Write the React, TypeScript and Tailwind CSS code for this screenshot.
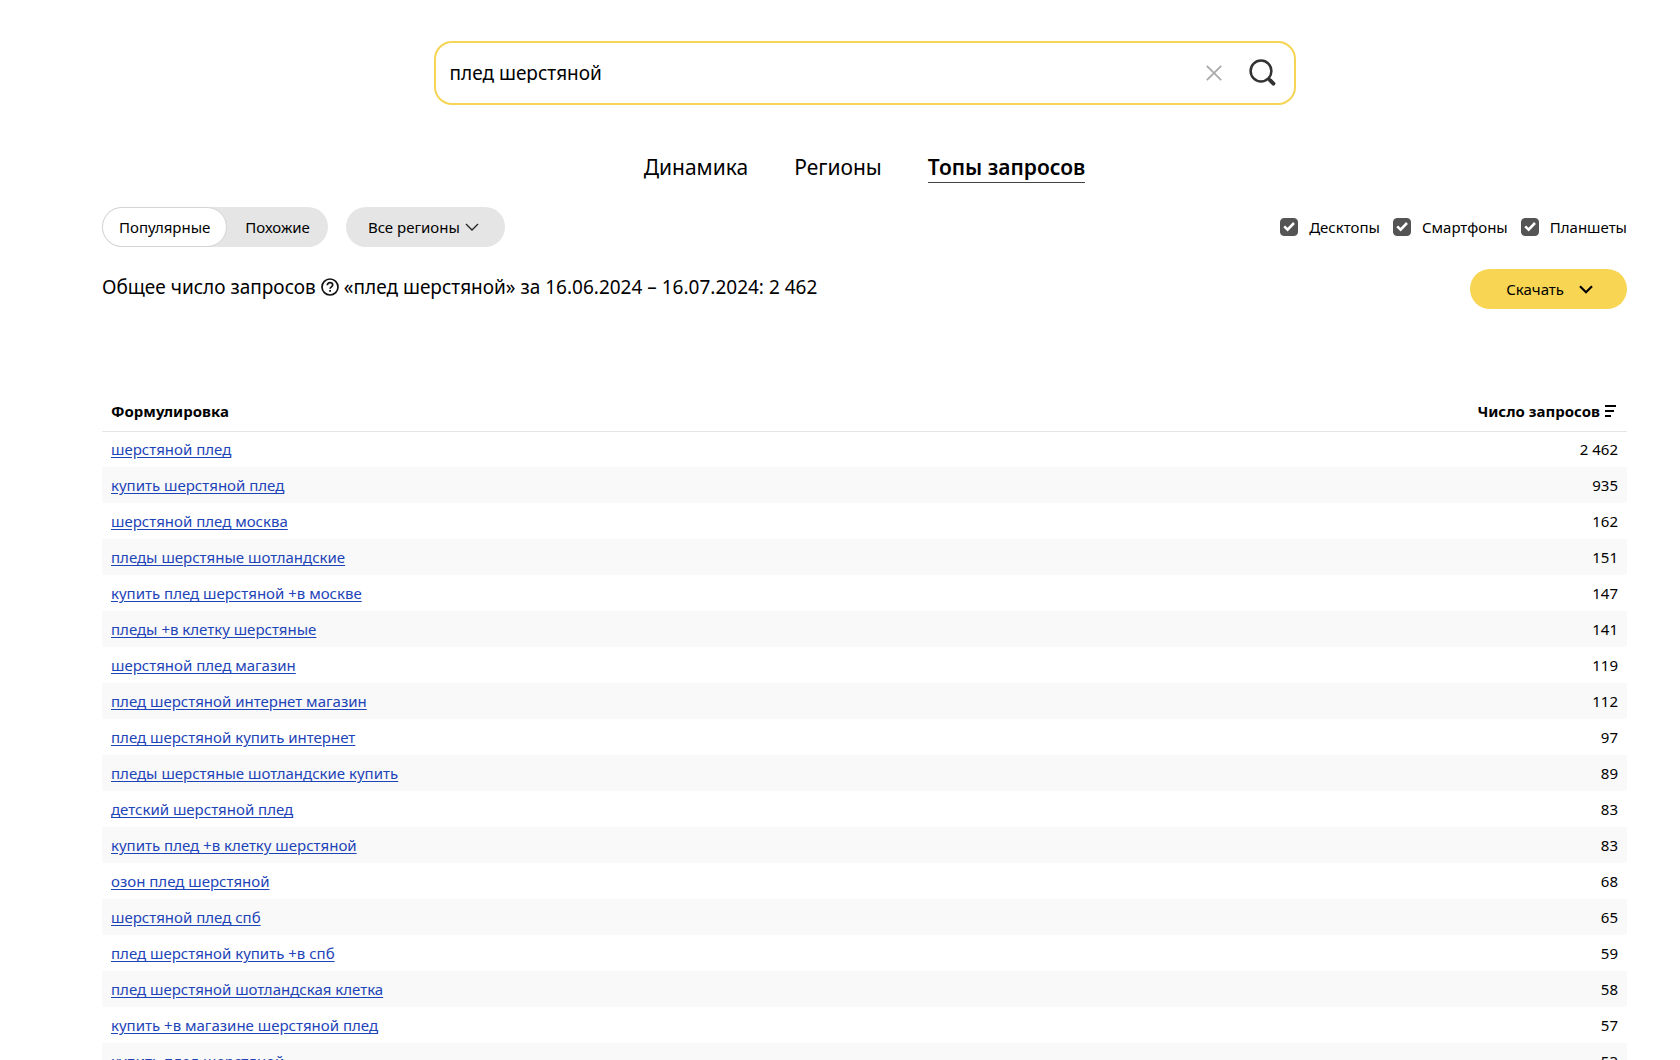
import { useState } from "react";

const rows: [string, string][] = [
  ["шерстяной плед", "2 462"],
  ["купить шерстяной плед", "935"],
  ["шерстяной плед москва", "162"],
  ["пледы шерстяные шотландские", "151"],
  ["купить плед шерстяной +в москве", "147"],
  ["пледы +в клетку шерстяные", "141"],
  ["шерстяной плед магазин", "119"],
  ["плед шерстяной интернет магазин", "112"],
  ["плед шерстяной купить интернет", "97"],
  ["пледы шерстяные шотландские купить", "89"],
  ["детский шерстяной плед", "83"],
  ["купить плед +в клетку шерстяной", "83"],
  ["озон плед шерстяной", "68"],
  ["шерстяной плед спб", "65"],
  ["плед шерстяной купить +в спб", "59"],
  ["плед шерстяной шотландская клетка", "58"],
  ["купить +в магазине шерстяной плед", "57"],
  ["купить плед шерстяной", "53"],
];

function Device({ label }: { label: string }) {
  return (
    <label className="flex items-center gap-[11px]">
      <span className="grid h-[18px] w-[18px]">
        <input
          type="checkbox"
          defaultChecked
          className="peer col-start-1 row-start-1 h-[18px] w-[18px] appearance-none rounded border border-[#545454] checked:bg-[#545454]"
        />
        <svg
          viewBox="0 0 18 18"
          className="pointer-events-none invisible col-start-1 row-start-1 h-[18px] w-[18px] peer-checked:visible"
          fill="none"
          stroke="#fff"
          strokeWidth="2.6"
        >
          <path d="M4.2 8.4 7.6 11.6 14 5" />
        </svg>
      </span>
      {label}
    </label>
  );
}

export default function App() {
  const [query, setQuery] = useState("плед шерстяной");
  return (
    <div className="h-screen overflow-hidden bg-white pt-[41px] pr-[53px] pl-[102px] font-['Noto_Sans','Open_Sans',sans-serif] text-[15px] leading-5 text-black">
      <form
        onSubmit={(e) => e.preventDefault()}
        className="mx-auto flex h-16 max-w-[862px] items-center rounded-[18px] border-2 border-[#f6d454] pr-4 pl-[14px]"
      >
        <input
          type="text"
          aria-label="Запрос"
          value={query}
          onChange={(e) => setQuery(e.target.value)}
          className="min-w-0 flex-1 text-[19px] outline-none"
        />
        <button type="button" aria-label="Очистить" onClick={() => setQuery("")} className="mr-[25px]">
          <svg viewBox="0 0 18 18" className="h-[18px] w-[18px]" fill="none" stroke="#aaa" strokeWidth="1.8">
            <path d="M1.8 1.8 16.2 16.2M16.2 1.8 1.8 16.2" />
          </svg>
        </button>
        <button type="submit" aria-label="Найти">
          <svg viewBox="0 0 30 30" className="h-[30px] w-[30px]" fill="none" stroke="#333">
            <circle cx="13" cy="13" r="10.4" strokeWidth="2.5" />
            <path d="m20.2 20.4 1.4 1.4" strokeWidth="2.4" />
            <path d="m22.2 22.4 3.2 3.2" strokeWidth="4" strokeLinecap="round" />
          </svg>
        </button>
      </form>

      <nav className="mt-[47px] flex justify-center gap-[46px] text-[21px] leading-[30px]">
        <a href="#dynamics">Динамика</a>
        <a href="#regions">Регионы</a>
        <a href="#top" className="border-b border-[#444] font-semibold">
          Топы запросов
        </a>
      </nav>

      <div className="mt-6 flex h-10 items-center justify-between">
        <div className="flex gap-[18px]">
          <div className="flex h-10 rounded-full bg-[#e5e5e5]">
            <button type="button" className="rounded-full border border-[#d4d4d4] bg-white px-4">
              Популярные
            </button>
            <button type="button" className="px-[18px]">
              Похожие
            </button>
          </div>
          <button type="button" className="flex h-10 items-center gap-[5px] rounded-full bg-[#e5e5e5] pr-[26px] pl-[22px]">
            Все регионы
            <svg viewBox="0 0 14 8" className="h-2 w-[14px]" fill="none" stroke="#222" strokeWidth="1.3">
              <path d="m1 1 6 6 6-6" />
            </svg>
          </button>
        </div>
        <div className="flex gap-[13px]">
          <Device label="Десктопы" />
          <Device label="Смартфоны" />
          <Device label="Планшеты" />
        </div>
      </div>

      <div className="mt-[22px] flex items-start justify-between">
        <h1 className="flex items-center gap-[5px] text-[19px] leading-9">
          Общее число запросов
          <svg viewBox="0 0 18 18" className="h-[18px] w-[18px]" fill="none" stroke="#111" strokeWidth="1.7">
            <circle cx="9" cy="9" r="8" />
            <path d="M6.3 7.2C6.3 5.6 7.5 4.7 9 4.7s2.7.9 2.7 2.3c0 1.8-2.6 1.9-2.6 3.8" />
            <path d="M9.1 12v1.7" strokeWidth="1.8" />
          </svg>
          «плед шерстяной» за 16.06.2024 – 16.07.2024: 2 462
        </h1>
        <button type="button" className="flex h-10 items-center gap-[15px] rounded-full bg-[#f8d552] pr-[34px] pl-9">
          Скачать
          <svg viewBox="0 0 14 9" className="h-[9px] w-[14px]" fill="none" stroke="#000" strokeWidth="2.2">
            <path d="m1 1.2 6 6 6-6" />
          </svg>
        </button>
      </div>

      <table className="mt-[82px] w-full border-collapse">
        <thead>
          <tr className="h-10 border-b border-[#e5e5e5]">
            <th className="px-[9px] text-left font-bold">Формулировка</th>
            <th className="px-[9px] font-bold">
              <span className="flex items-center justify-end gap-1">
                Число запросов
                <svg viewBox="0 0 14 12" className="h-3 w-[14px]" stroke="#000" strokeWidth="2">
                  <path d="M1 1h11M1 6h9M1 11h6" />
                </svg>
              </span>
            </th>
          </tr>
        </thead>
        <tbody>
          {rows.map(([text, count]) => (
            <tr key={text} className="h-9 even:bg-[#f9f9f9]">
              <td className="px-[9px]">
                <a href="#query" className="text-[#1d44b8] underline underline-offset-2">
                  {text}
                </a>
              </td>
              <td className="px-[9px] text-right">{count}</td>
            </tr>
          ))}
        </tbody>
      </table>
    </div>
  );
}
